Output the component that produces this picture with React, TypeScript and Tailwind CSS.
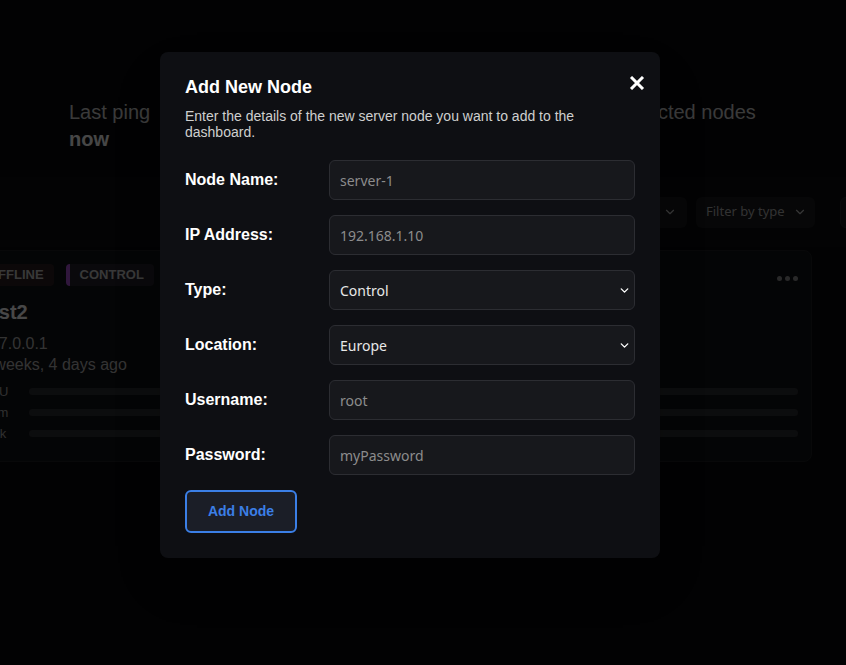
import React from 'react';
import { ChevronDown } from 'lucide-react';

const fields = [
  { label: 'Node Name:', kind: 'input', value: 'server-1' },
  { label: 'IP Address:', kind: 'input', value: '192.168.1.10' },
  { label: 'Type:', kind: 'select', value: 'Control', options: ['Control', 'Worker', 'Storage'] },
  { label: 'Location:', kind: 'select', value: 'Europe', options: ['Europe', 'North America', 'Asia'] },
  { label: 'Username:', kind: 'input', value: 'root' },
  { label: 'Password:', kind: 'input', value: 'myPassword' },
];

const usage = [
  { label: 'CPU', width: 0 },
  { label: 'Ram', width: 0 },
  { label: 'Disk', width: 0 },
];

const App = () => {
  return (
    <div className="relative min-h-screen w-full overflow-hidden bg-[#07080a] font-['Liberation_Sans',Arial,sans-serif]">
      {/* dashboard behind the modal */}
      <div className="grid w-[864px] grid-cols-3 pl-[69px] pt-[99px] text-[20px] leading-[27px]">
        <div>
          <div className="text-[#c3c3c3]">Last ping</div>
          <div className="font-bold text-[#ebebeb]">now</div>
        </div>
        <div>
          <div className="text-[#c3c3c3]">Nodes online</div>
          <div className="font-bold text-[#ebebeb]">1</div>
        </div>
        <div>
          <div className="text-[#c3c3c3]">Connected nodes</div>
          <div className="font-bold text-[#ebebeb]">2</div>
        </div>
      </div>

      <div className="mt-[24px] flex h-[70px] items-center gap-[9px] bg-[#0b0c0e] pl-[527px] font-['Noto_Sans',sans-serif] text-[13px] text-[#a8a8a8]">
        <div className="flex h-[31px] w-[160px] shrink-0 items-center justify-between rounded-md bg-[#18191c] px-[10px]">
          <span>Filter by location</span>
          <ChevronDown size={14} className="text-[#b5b5b5]" />
        </div>
        <div className="flex h-[31px] w-[119px] shrink-0 items-center justify-between rounded-md bg-[#18191c] pl-[10px] pr-[8px]">
          <span>Filter by type</span>
          <ChevronDown size={14} className="text-[#b5b5b5]" />
        </div>
        <div className="ml-[16px] flex h-[31px] w-[100px] shrink-0 items-center rounded-md border border-[#24252a] bg-[#18191c] px-[10px]">
          Sort
        </div>
      </div>

      <div className="mt-[3px] ml-[-36px] flex h-[212px] w-[848px] flex-col rounded-lg border border-[#1c1d21] bg-[#101114] px-[16px] pt-[13px]">
        <div className="flex items-center justify-between">
          <div className="flex items-center gap-[12px] text-[13px] font-bold uppercase text-[#bcbcbc]">
            <div className="flex h-[22px] items-center rounded-sm border-l-4 border-[#d13b3b] bg-[#2a1d20] pl-[3px] pr-[10px]">
              Offline
            </div>
            <div className="flex h-[22px] items-center rounded-sm border-l-4 border-[#a24fc9] bg-[#23212a] pl-[10px] pr-[10px]">
              Control
            </div>
          </div>
          <div className="mr-[-3px] mt-[6px] flex gap-[3px]">
            <span className="h-[5px] w-[5px] rounded-full bg-[#8a8a8a]" />
            <span className="h-[5px] w-[5px] rounded-full bg-[#8a8a8a]" />
            <span className="h-[5px] w-[5px] rounded-full bg-[#8a8a8a]" />
          </div>
        </div>
        <div className="mt-[12px] text-[20px] font-bold leading-[28px] text-[#eeeeee]">test2</div>
        <div className="mt-[7px] text-[16px] leading-[21px] text-[#acacac]">
          <div>127.0.0.1</div>
          <div>2 weeks, 4 days ago</div>
        </div>
        <div className="mt-[13px] flex flex-col gap-[14px]">
          {usage.map((u) => (
            <div key={u.label} className="flex h-[7px] items-center">
              <span className="w-[48px] text-[13px] text-[#a0a0a0]">{u.label}</span>
              <div className="mr-[-3px] h-[7px] flex-1 rounded-full bg-[#2b2c30]">
                <div className="h-full rounded-full bg-[#3b82f6]" style={{ width: `${u.width}%` }} />
              </div>
            </div>
          ))}
        </div>
      </div>

      {/* overlay + modal */}
      <div className="absolute inset-0 bg-black/70" />
      <div className="absolute left-[160px] top-[52px] w-[500px] rounded-lg bg-[#0e0f13] px-[25px] pb-[25px] pt-[21px] shadow-2xl">
        <div className="flex items-start justify-between">
          <h2 className="text-[18px] font-bold leading-[28px] text-white">Add New Node</h2>
          <button className="mt-[3px] mr-[-10px] text-white">
            <svg width="16" height="14" viewBox="0 0 16 14">
              <path d="M2 1 L14 13 M14 1 L2 13" stroke="currentColor" strokeWidth="3" strokeLinecap="butt" />
            </svg>
          </button>
        </div>
        <p className="mt-[7px] text-[14px] leading-[16px] text-[#cfcfcf]">
          Enter the details of the new server node you want to add to the dashboard.
        </p>
        <div className="mt-[20px] flex flex-col gap-[15px]">
          {fields.map((f) => (
            <div key={f.label} className="flex items-center">
              <label className="w-[144px] shrink-0 text-[16px] font-bold text-white">{f.label}</label>
              {f.kind === 'input' ? (
                <input
                  type="text"
                  placeholder={f.value}
                  className="h-[40px] flex-1 rounded-md border border-[#2c2d32] bg-[#17181c] px-[10px] font-['Noto_Sans',sans-serif] text-[14px] text-[#e5e5e5] placeholder:text-[#8c8c8c] outline-none"
                />
              ) : (
                <div className="relative flex-1">
                  <select
                    defaultValue={f.value}
                    className="h-[40px] w-full appearance-none rounded-md border border-[#2c2d32] bg-[#17181c] px-[10px] font-['Noto_Sans',sans-serif] text-[14px] text-[#e8e8e8] outline-none"
                  >
                    {f.options?.map((o) => (
                      <option key={o}>{o}</option>
                    ))}
                  </select>
                  <ChevronDown
                    size={13}
                    strokeWidth={2.5}
                    className="pointer-events-none absolute right-[4px] top-[14px] text-white"
                  />
                </div>
              )}
            </div>
          ))}
        </div>
        <button className="mt-[15px] h-[43px] w-[112px] rounded-md border-2 border-[#3b7fe6] bg-[#1b1e27] text-[14px] font-bold text-[#3b7fe6]">
          Add Node
        </button>
      </div>
    </div>
  );
};

export default App;
